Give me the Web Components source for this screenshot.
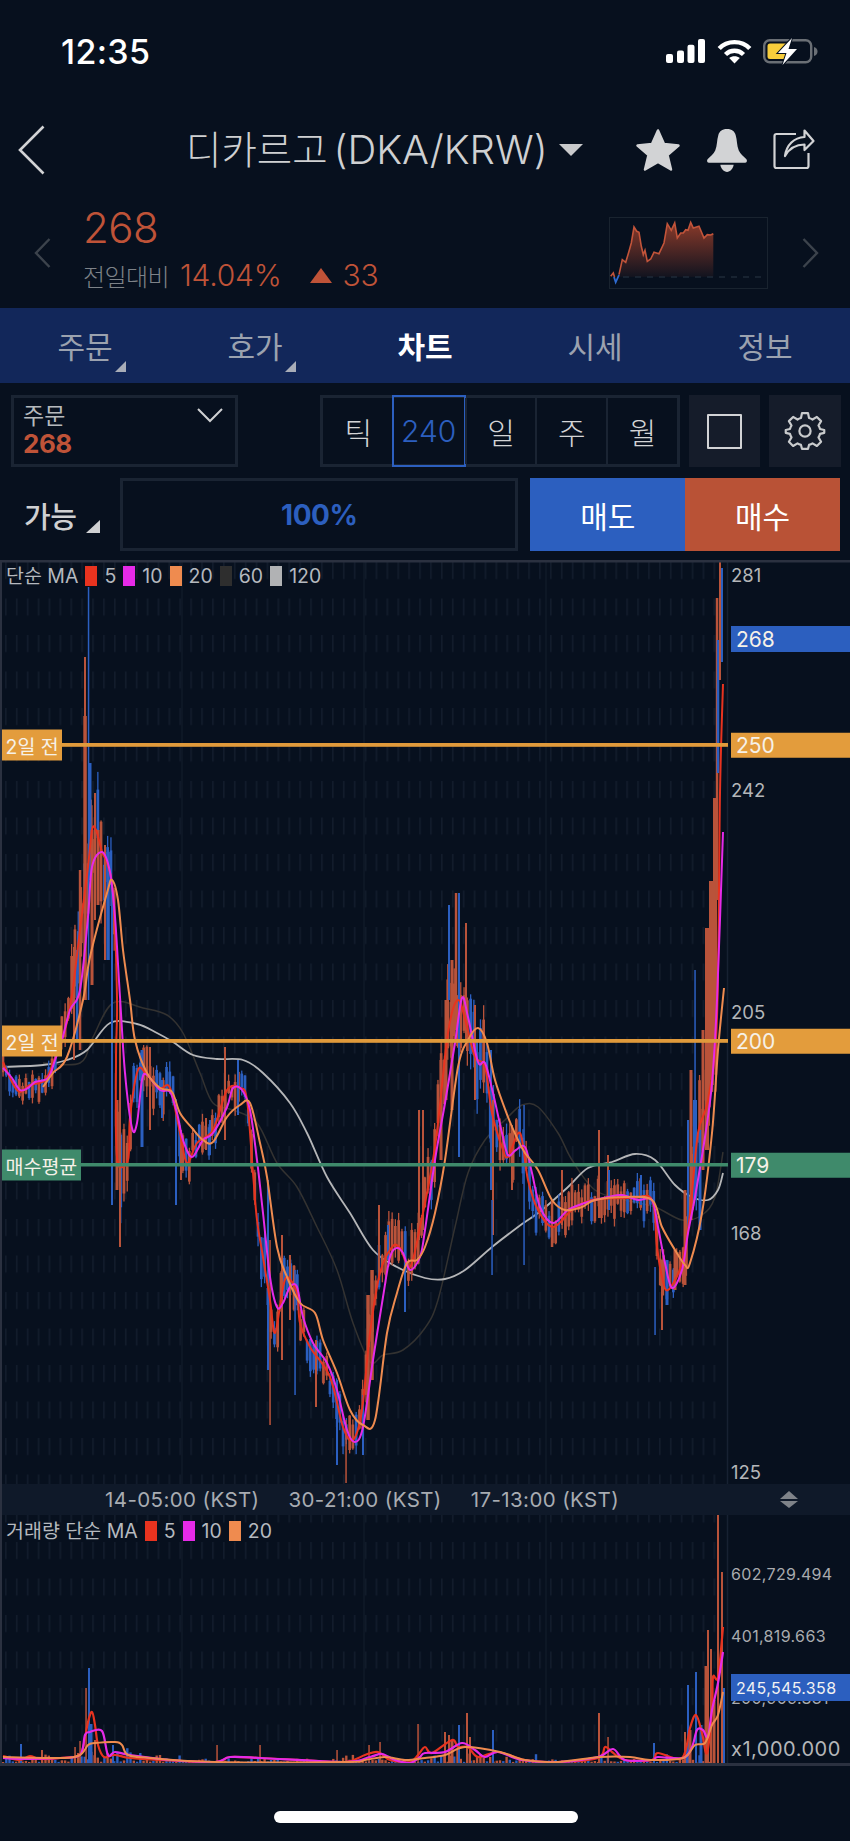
<!DOCTYPE html>
<html lang="ko">
<head>
<meta charset="utf-8">
<title>디카르고 차트</title>
<style>
  html, body { margin: 0; padding: 0; background: #07101e; }
  body { width: 850px; height: 1841px; overflow: hidden; color: #c8cacd; font-family: Inter, "Noto Sans CJK KR", sans-serif; }
</style>
</head>
<body>
<status-bar></status-bar>
<nav-header>디카르고 <span style="font-size:40px">(DKA/KRW)</span></nav-header>
<price-summary></price-summary>
<tab-bar></tab-bar>
<chart-toolbar></chart-toolbar>
<order-row></order-row>
<price-pane>
  <chart-legend slot="legend" label="단순 MA" items="5:#e8331f,10:#e62ae8,20:#ef8b4f,60:#2e2e2e,120:#b1b2b4"></chart-legend>
  <price-tag slot="over" side="left" y="745" color="#e39c3c">2일 전</price-tag>
  <price-tag slot="over" side="left" y="1041" color="#e39c3c">2일 전</price-tag>
  <price-tag slot="over" side="left" y="1164.5" color="#3f8a6b">매수평균</price-tag>
  <price-tag slot="over" y="639" color="#2c5fbf">268</price-tag>
  <price-tag slot="over" y="745" color="#e39c3c">250</price-tag>
  <price-tag slot="over" y="1041" color="#e39c3c">200</price-tag>
  <price-tag slot="over" y="1165" color="#3f8a6b">179</price-tag>
</price-pane>
<time-axis></time-axis>
<volume-pane>
  <chart-legend slot="legend" label="거래량 단순 MA" items="5:#e8331f,10:#e62ae8,20:#ef8b4f"></chart-legend>
</volume-pane>
<home-bar></home-bar>

<script>
const UP = "#b9533a", DOWN = "#2b5fc0", MA_RED = "#e8331f", MA_PINK = "#e62ae8", MA_ORANGE = "#ef8b4f", MA_GRAY = "#b5b6b8", MA_DARK = "#333231";

const RED = [[3,1062],[12,1082],[20,1092],[30,1085],[45,1080],[55,1058],[65,1030],[72,995],[80,930],[88,867],[92,830],[96,830],[102,852],[107,863],[113,893],[117,997],[116,1060],[117,1157],[128,1160],[130,1117],[138,1070],[147,1075],[160,1088],[170,1088],[180,1133],[187,1163],[197,1143],[213,1130],[227,1090],[240,1088],[247,1100],[253,1173],[257,1220],[263,1257],[270,1300],[275,1333],[282,1293],[287,1277],[297,1293],[300,1323],[310,1347],[330,1377],[343,1427],[353,1440],[362,1410],[370,1333],[380,1273],[392,1247],[400,1248],[410,1267],[420,1227],[435,1147],[448,1033],[458,1000],[467,1027],[475,1057],[485,1067],[492,1113],[502,1147],[508,1157],[520,1133],[528,1180],[538,1210],[553,1227],[572,1210],[592,1200],[632,1198],[652,1200],[657,1247],[662,1277],[668,1290],[682,1263],[690,1213],[698,1133],[708,1100],[717,1017],[720,793],[723,684]];
const PINK = [[3,1068],[12,1078],[20,1090],[28,1088],[35,1082],[48,1078],[55,1060],[62,1040],[70,1010],[80,990],[88,917],[92,867],[102,852],[110,872],[115,917],[120,997],[125,1073],[132,1128],[137,1123],[142,1080],[147,1075],[160,1090],[170,1092],[177,1113],[183,1140],[192,1157],[203,1140],[213,1133],[227,1107],[233,1088],[242,1090],[250,1110],[257,1160],[263,1213],[270,1277],[277,1307],[283,1303],[290,1287],[297,1287],[303,1317],[313,1343],[327,1363],[337,1390],[347,1430],[355,1442],[363,1427],[373,1360],[383,1297],[390,1257],[397,1248],[403,1253],[410,1270],[420,1257],[425,1230],[435,1160],[445,1103],[455,1043],[462,998],[468,1017],[478,1062],[485,1063],[493,1093],[502,1133],[508,1155],[516,1150],[525,1147],[532,1173],[540,1207],[553,1223],[568,1210],[585,1203],[595,1200],[608,1197],[622,1195],[638,1200],[652,1200],[658,1227],[665,1263],[672,1288],[682,1270],[688,1233],[695,1197],[705,1137],[712,1083],[717,1000],[723,832]];
const ORANGE = [[43,1087],[53,1073],[67,1057],[83,1000],[90,957],[107,893],[112,880],[118,900],[123,950],[130,1000],[135,1040],[147,1073],[160,1088],[172,1092],[180,1113],[192,1128],[203,1140],[213,1142],[227,1117],[240,1105],[250,1103],[260,1143],[267,1177],[277,1247],[287,1277],[300,1303],[315,1313],[323,1340],[337,1373],[350,1410],[363,1425],[375,1420],[387,1333],[397,1293],[407,1263],[417,1260],[425,1247],[435,1213],[445,1160],[458,1067],[468,1040],[478,1028],[487,1043],[495,1080],[508,1117],[518,1140],[525,1153],[538,1170],[552,1200],[565,1210],[582,1207],[595,1200],[625,1197],[652,1200],[662,1227],[675,1250],[685,1265],[690,1263],[702,1213],[712,1133],[718,1050],[724,988]];
const GRAY = [[2,1067],[43,1065],[67,1060],[87,1050],[110,1023],[137,1024],[157,1033],[173,1042],[193,1055],[217,1059],[243,1060],[263,1073],[290,1103],[307,1133],[327,1177],[350,1213],[373,1250],[397,1267],[425,1278],[445,1279],[465,1270],[492,1247],[518,1227],[542,1210],[568,1187],[588,1168],[612,1162],[635,1154],[655,1160],[675,1185],[692,1197],[708,1200],[718,1190],[723,1173]];
const DARK = [[43,1063],[80,1063],[93,1037],[113,1003],[143,1008],[167,1015],[183,1033],[200,1073],[213,1103],[233,1110],[257,1123],[277,1163],[297,1187],[317,1227],[337,1270],[353,1323],[370,1362],[383,1355],[403,1350],[425,1328],[438,1300],[455,1227],[468,1173],[485,1140],[505,1120],[522,1105],[538,1107],[558,1133],[572,1160],[595,1190],[625,1200],[655,1207],[682,1220],[702,1215],[715,1197],[723,1152]];
const AMP = [[3,14],[60,20],[85,70],[115,60],[130,35],[180,28],[230,20],[260,30],[300,30],[345,22],[365,30],[425,30],[450,55],[490,40],[530,30],[560,24],[650,24],[660,30],[680,20],[700,50],[722,60]];

// [x, top, bottom, colour, width]
const SPIKES = [
  [74,947,1060,UP,2],[80,870,1050,UP,2.5],[77,950,1040,DOWN,2.5],[85,657,760,UP,2],[85,716,1000,UP,3.5],[88.5,587,1000,DOWN,1.5],[90,763,880,DOWN,3],[95,793,920,UP,2],[92,830,985,UP,3],[98,830,905,UP,3],[105,845,960,UP,2],[108,852,960,DOWN,3.5],[112,880,1205,DOWN,2],[120,1000,1247,UP,2],[117,1100,1190,UP,3],
  [142,1050,1147,DOWN,3],[150,1047,1130,UP,2],[176,1110,1205,DOWN,2],[162,1080,1118,DOWN,2],[181,1130,1180,UP,2],[225,1047,1140,UP,2],[238,1060,1115,DOWN,2],[206,1118,1150,UP,2],[210,1120,1155,DOWN,2],
  [270,1240,1425,UP,1.5],[268,1180,1370,DOWN,2],[282,1235,1360,UP,2],[295,1270,1395,DOWN,1.5],[290,1255,1320,UP,2],[316,1340,1407,UP,2],[337,1380,1465,DOWN,2],[346,1420,1483,UP,1.5],[379,1205,1280,UP,2],[388,1225,1260,DOWN,2],[405,1270,1312,DOWN,2],[363,1395,1455,DOWN,2],[368,1295,1420,UP,3.5],[372,1270,1380,UP,3.5],
  [419,1110,1240,UP,2],[423,1110,1230,UP,2],[449,905,1000,DOWN,2],[456,893,1030,UP,2.5],[459,893,1157,DOWN,2],[466,923,1040,UP,2],[452,960,1110,UP,3],[446,1000,1100,UP,3],[441,1060,1160,UP,3],[475,1005,1100,UP,2],[477,1040,1095,DOWN,2],[491,1050,1190,DOWN,2],[493,1100,1235,UP,2],[492,1200,1275,DOWN,1.5],[524,1105,1265,DOWN,1.5],[512,1125,1190,UP,2],[552,1200,1247,UP,2.5],[562,1170,1225,UP,2],[599,1130,1218,UP,2],[608,1155,1205,UP,2],[609,1170,1210,DOWN,2],[641,1175,1205,DOWN,2],
  [655,1267,1335,DOWN,1.5],[662,1260,1330,UP,2],[667,1260,1305,DOWN,3],[675,1250,1290,UP,3],[685,1190,1285,UP,3],[688,1120,1230,DOWN,2],[691,1070,1220,UP,3],[695,970,1100,DOWN,1.5],[695,1100,1200,DOWN,4],[700,1130,1230,DOWN,3],[703,1030,1170,UP,3],[707,928,1150,UP,4],[711,881,1080,UP,4],[715,798,1040,UP,4],[717,598,900,UP,2.5],[718,640,773,DOWN,2.5],[720,562,680,UP,2],[722,568,662,DOWN,2]
];

const VOL_SPIKES = [[89,1668,DOWN,2],[86,1688,UP,1.5],[21,1744,DOWN,2],[42,1750,UP,2],[75,1747,UP,1.5],[80,1741,UP,1.5],[91,1724,DOWN,3],[95,1740,UP,2],[113,1745,DOWN,2],[217,1745,UP,1.5],[260,1745,UP,1.5],[337,1750,UP,1.5],[369,1745,UP,1.5],[380,1742,UP,1.5],[418,1724,UP,1.5],
  [445,1732,UP,2],[449,1735,UP,2],[467,1713,UP,2],[459,1725,DOWN,2],[452,1740,UP,3],[493,1730,DOWN,2],[470,1737,UP,2],[599,1713,UP,2],[608,1737,UP,1.5],[654,1743,DOWN,2],[687,1745,DOWN,2],[685,1732,UP,2],[688,1685,DOWN,2],[696,1672,DOWN,2],[690,1730,UP,3],[706,1666,UP,3],[708,1630,UP,2],[711,1649,UP,2],[714,1700,UP,3],[718,1515,UP,2],[722,1572,UP,2],[724,1688,DOWN,2],[701,1725,DOWN,3]];
const VOL_RED = [[3,1756],[20,1760],[30,1756],[40,1759],[60,1758],[78,1756],[83,1748],[88,1722],[92,1712],[95,1725],[98,1745],[104,1757],[115,1755],[130,1758],[160,1760],[215,1762],[230,1757],[260,1758],[300,1760],[345,1762],[365,1755],[378,1752],[390,1760],[410,1762],[418,1755],[425,1747],[432,1753],[452,1740],[458,1747],[468,1747],[478,1757],[498,1752],[525,1760],[558,1762],[598,1758],[605,1747],[612,1752],[625,1760],[652,1760],[658,1753],[682,1758],[690,1728],[696,1715],[702,1733],[707,1753],[712,1710],[713,1677],[718,1677],[723,1627]];
const VOL_PINK = [[3,1758],[20,1759],[60,1758],[80,1755],[85,1735],[90,1732],[102,1731],[108,1755],[115,1752],[130,1755],[170,1760],[215,1762],[230,1757],[260,1758],[345,1762],[370,1757],[382,1754],[395,1760],[410,1763],[420,1757],[425,1753],[445,1752],[462,1743],[475,1750],[485,1757],[498,1752],[522,1760],[558,1762],[598,1757],[613,1749],[625,1760],[652,1760],[658,1757],[683,1758],[692,1747],[697,1730],[703,1730],[708,1737],[712,1710],[718,1683],[723,1652]];
const VOL_ORANGE = [[3,1757],[60,1758],[80,1755],[88,1745],[95,1743],[115,1742],[122,1745],[128,1755],[150,1758],[215,1762],[345,1762],[365,1760],[385,1757],[405,1760],[425,1758],[445,1755],[465,1747],[500,1752],[525,1760],[558,1762],[600,1757],[630,1757],[650,1760],[683,1758],[695,1745],[705,1743],[712,1725],[718,1715],[723,1692]];

const at = (line, x) => {
  if (x <= line[0][0]) return line[0][1];
  for (let i = 1; i < line.length; i++) {
    if (x <= line[i][0]) {
      const a = line[i - 1], b = line[i];
      return a[1] + (b[1] - a[1]) * (x - a[0]) / (b[0] - a[0] || 1);
    }
  }
  return line[line.length - 1][1];
};

// catmull-rom through the points, so the averages read as curves
const curve = (pts) => {
  let d = `M${pts[0][0]} ${pts[0][1]}`;
  for (let i = 0; i < pts.length - 1; i++) {
    const p0 = pts[i - 1] || pts[i], p1 = pts[i], p2 = pts[i + 1], p3 = pts[i + 2] || p2;
    const k = 6;
    d += `C${(p1[0] + (p2[0] - p0[0]) / k).toFixed(1)} ${(p1[1] + (p2[1] - p0[1]) / k).toFixed(1)} ${(p2[0] - (p3[0] - p1[0]) / k).toFixed(1)} ${(p2[1] - (p3[1] - p1[1]) / k).toFixed(1)} ${p2[0]} ${p2[1]}`;
  }
  return d;
};

const random = (seed) => () => (seed = seed * 16807 % 2147483647) / 2147483647;
const rect = (x, y1, y2, w, fill) => `<rect x="${(x - w / 2).toFixed(1)}" y="${y1.toFixed(1)}" width="${w}" height="${Math.max(y2 - y1, 1).toFixed(1)}" fill="${fill}"/>`;
const stroke = (d, color, w) => `<path d="${d}" fill="none" stroke="${color}" stroke-width="${w}" stroke-linejoin="round"/>`;

const gridDefs = (id, y) => `
  <defs>
    <pattern id="${id}" patternUnits="userSpaceOnUse" x="5" y="${y}" width="10.9" height="36.5">
      <rect width="1.6" height="17" fill="#121c2c"/>
    </pattern>
  </defs>`;

function candles() {
  const rnd = random(4711);
  let out = "";
  for (let x = 3; x < 716; x += 3.27) {
    const mid = at(RED, x), slope = at(RED, x + 4) - at(RED, x - 4), amp = at(AMP, x);
    const color = rnd() < (slope < 0 ? 0.78 : slope > 8 ? 0.35 : 0.55) ? UP : DOWN;
    const c = mid + (rnd() - 0.5) * amp * 0.9;
    const h = amp * (0.25 + rnd() * 0.5);
    out += rect(x, c - h - rnd() * amp * 0.35, c + h + rnd() * amp * 0.35, 1.3, color);
    out += rect(x, c - h, c + h, 2.7, color);
  }
  return out;
}

class StatusBar extends HTMLElement {
  connectedCallback() {
    this.attachShadow({ mode: "open" }).innerHTML = `
      <style>
        :host { display: flex; align-items: flex-start; justify-content: space-between; height: 100px; box-sizing: border-box; padding: 35px 30px 0 61px; }
        .time { font-size: 34px; line-height: 34px; font-weight: 500; color: #fff; letter-spacing: 0.3px; }
        .icons { display: flex; gap: 11px; margin-top: 4px; }
        svg { display: block; }
      </style>
      <div class="time">12:35</div>
      <div class="icons">
        <svg width="40" height="25" viewBox="0 0 40 25" fill="#fff">
          <rect x="0" y="15" width="7" height="9" rx="2"/><rect x="11" y="11.5" width="7" height="12.5" rx="2"/><rect x="21.5" y="5.7" width="7" height="18.3" rx="2"/><rect x="32" y="0" width="7" height="24" rx="2"/>
        </svg>
        <svg width="35" height="25" viewBox="0 0 35 25" fill="none" stroke="#fff" stroke-width="4.4">
          <path d="M2.2 9.5C10 1 25 1 32.8 9.5"/><path d="M8.5 15.5C13.5 10.5 21.5 10.5 26.5 15.5"/>
          <path d="M17.5 24.5L12.2 19C15 16.8 20 16.8 22.8 19Z" fill="#fff" stroke="none"/>
        </svg>
        <svg width="57" height="29" viewBox="0 0 57 29" style="margin-top:-2px">
          <rect x="1.2" y="3.2" width="47" height="22" rx="5.5" fill="none" stroke="#6a6f75" stroke-width="2.4"/>
          <path d="M51 10c2.500.5 3.500 2.500 3.500 4.500s-1 4-3.500 4.500z" fill="#6a6f75"/>
          <rect x="4.500" y="6.500" width="21" height="15.500" rx="2.500" fill="#f7cd3c"/>
          <path d="M29 1L15 16H23.500L19.500 28L34 12H25.500Z" fill="#fff" stroke="#07101e" stroke-width="2" paint-order="stroke"/>
        </svg>
      </div>`;
  }
}

class NavHeader extends HTMLElement {
  connectedCallback() {
    this.attachShadow({ mode: "open" }).innerHTML = `
      <style>
        :host { display: flex; align-items: center; height: 100px; box-sizing: border-box; padding: 0 35px 0 18px; }
        svg { display: block; flex: none; }
        .title { margin-left: 140px; font-size: 38.500px; font-weight: 300; line-height: 50px; word-spacing: -5px; color: #cfd0d2; white-space: nowrap; }
        .caret { margin-left: 11px; }
        .star { margin-left: auto; }
        .bell { margin-left: 25px; }
        .share { margin-left: 25px; }
      </style>
      <svg width="28" height="50" viewBox="0 0 28 50" fill="none" stroke="#d2d3d5" stroke-width="2.6"><path d="M25.500 1.500L2 25L25.500 48.500"/></svg>
      <div class="title"><slot></slot></div>
      <svg class="caret" width="24" height="12" viewBox="0 0 24 12"><path d="M0 0H24L12 12Z" fill="#c9cacc"/></svg>
      <svg class="star" width="46" height="44" viewBox="0 0 46 44"><path d="M23 2.500L29 16L43.500 17.500L32.500 27L36 41.500L23 33.800L10 41.500L13.500 27L2.500 17.500L17 16Z" fill="#d2d3d5" stroke="#d2d3d5" stroke-width="2.500" stroke-linejoin="round"/></svg>
      <svg class="bell" width="42" height="43" viewBox="0 0 40 42" fill="#d2d3d5">
        <path d="M20 0C15 0 12.500 2.500 11.500 6C10 11 10.500 16 8.500 21C7 24.500 3.500 27 1 29.500C0 31 .5 33 2.500 33H37.500C39.500 33 40 31 39 29.500C36.500 27 33 24.500 31.500 21C29.500 16 30 11 28.500 6C27.500 2.500 25 0 20 0Z"/>
        <path d="M13.500 35H26.500C26 39 23 42 20 42S14 39 13.500 35Z"/>
      </svg>
      <svg class="share" width="42" height="42" viewBox="0 0 42 42" fill="none" stroke="#d2d3d5" stroke-width="2.200">
        <path d="M23 5H3.500A2 2 0 0 0 1.500 7V37A2 2 0 0 0 3.500 39H33.500A2 2 0 0 0 35.500 37V24"/>
        <path d="M31.500 1.500L40.500 12L31.500 21V15.500C23 15.500 16.500 19 12 27C13.500 16 21 8.500 31.500 8Z" stroke-linejoin="round"/>
      </svg>`;
  }
}

class PriceSummary extends HTMLElement {
  connectedCallback() {
    const line = [[10,57.7],[13.3,42.7],[16.7,45.3],[20,34.3],[22.3,26],[25,10],[27.7,14.3],[30,15.3],[32.3,29.3],[34.3,37.7],[36,33.3],[38.3,44.3],[41.7,42],[45,35.3],[50,36.7],[55,26],[58.3,6.7],[62.3,13.3],[65.7,6],[68.3,21],[71.7,16],[74.3,16],[76.7,12.7],[79,13.3],[81.7,5.3],[84.3,11],[90,9.3],[95,21],[98.3,17.7],[101.7,18],[104.3,16.7]];
    const path = line.map((p, i) => `${i ? "L" : "M"}${p[0]} ${p[1]}`).join("");
    this.attachShadow({ mode: "open" }).innerHTML = `
      <style>
        :host { display: flex; align-items: flex-start; height: 108px; box-sizing: border-box; padding-left: 34px; }
        svg { display: block; flex: none; }
        .left { margin-top: 38px; }
        .info { margin-left: 32px; flex: none; width: 526px; }
        .price { margin-top: 5px; font-size: 42px; line-height: 46px; font-weight: 300; color: #bf5338; letter-spacing: -0.5px; }
        .change { display: flex; align-items: center; margin-top: 7px; height: 34px; font-size: 30px; font-weight: 300; color: #bf5338; letter-spacing: -0.2px; }
        .label { font-size: 24px; color: #7d8288; letter-spacing: -0.6px; margin-right: 11px; }
        .tri { margin: 0 11px 0 28px; }
        .spark { margin-top: 17px; }
        .right { margin: 38px 0 0 33px; }
      </style>
      <svg class="left" width="17" height="30" viewBox="0 0 17 30" fill="none" stroke="#3c434c" stroke-width="2.400"><path d="M15.500 1L2 15L15.500 29"/></svg>
      <div class="info">
        <div class="price">268</div>
        <div class="change"><span class="label">전일대비</span><span>14.04%</span>
          <svg class="tri" width="22" height="15" viewBox="0 0 22 15"><path d="M11 0L22 15H0Z" fill="#bf5338"/></svg><span>33</span></div>
      </div>
      <svg class="spark" width="160" height="73" viewBox="0 0 160 73">
        <defs><linearGradient id="g" x1="0" y1="0" x2="0" y2="1"><stop offset="0" stop-color="#8a3a2a"/><stop offset="1" stop-color="#8a3a2a" stop-opacity=".08"/></linearGradient></defs>
        <rect x=".5" y=".5" width="158" height="71" fill="none" stroke="#19232f"/>
        <path d="${path}L104.300 60H10Z" fill="url(#g)"/>
        <path d="M14 60H153" stroke="#1f2a38" stroke-width="1.400" stroke-dasharray="6 6"/>
        <path d="${path}" fill="none" stroke="#c2543a" stroke-width="1.600"/>
        <path d="M5 60L6.700 65.300L10 58" fill="none" stroke="#2f6bd0" stroke-width="1.800"/>
        <path d="M1.700 59.300L4.300 56L5.500 60" fill="none" stroke="#c2543a" stroke-width="1.600"/>
      </svg>
      <svg class="right" width="17" height="30" viewBox="0 0 17 30" fill="none" stroke="#3c434c" stroke-width="2.400"><path d="M1.500 1L15 15L1.500 29"/></svg>`;
  }
}

class TabBar extends HTMLElement {
  connectedCallback() {
    const tabs = [["주문", 1], ["호가", 1], ["차트", 0, 1], ["시세"], ["정보"]];
    this.attachShadow({ mode: "open" }).innerHTML = `
      <style>
        :host { display: grid; grid-template-columns: repeat(5, 170px); height: 75px; background: #12275a; }
        .tab { position: relative; display: flex; align-items: center; justify-content: center; font-size: 30px; color: #9ba2af; padding-bottom: 1px; }
        .on { color: #fff; font-weight: 700; }
        svg { position: absolute; left: 115px; top: 53px; }
      </style>
      ${tabs.map(([t, tri, on]) => `<div class="tab ${on ? "on" : ""}">${t}${tri ? `<svg width="11" height="11" viewBox="0 0 11 11"><path d="M11 0V11H0Z" fill="#a8adb8"/></svg>` : ""}</div>`).join("")}`;
  }
}

class ChartToolbar extends HTMLElement {
  connectedCallback() {
    const periods = ["틱", "240", "일", "주", "월"];
    this.attachShadow({ mode: "open" }).innerHTML = `
      <style>
        :host { display: flex; align-items: stretch; height: 72px; margin-top: 12px; padding: 0 9px 0 11px; }
        .order { position: relative; width: 227px; box-sizing: border-box; border: 3px solid #1a2433; padding: 5px 9px; margin-right: 82px; }
        .order b { display: block; font-size: 26px; line-height: 30px; color: #bf5338; letter-spacing: -0.5px; }
        .order span { display: block; font-size: 23px; line-height: 26px; color: #b5b9bd; }
        .order svg { position: absolute; right: 12px; top: 10px; }
        .seg { display: grid; grid-template-columns: repeat(5, 1fr); width: 360px; box-sizing: border-box; border: 3px solid #1a2433; margin-right: 9px; }
        .seg div { display: flex; align-items: center; justify-content: center; font-size: 30px; font-weight: 300; color: #d3d4d6; border-left: 2px solid #1a2433; box-sizing: border-box; }
        .seg div:first-child { border-left: 0; }
        .seg .on { color: #2c5fbf; outline: 2.500px solid #2c5fbf; outline-offset: -1px; border: 0; margin: -2px 0 -2px -1px; }
        .btn { display: flex; align-items: center; justify-content: center; width: 71px; background: #151c2a; }
        .btn + .btn { margin-left: 9px; width: 72px; }
        .sq { width: 35px; height: 35px; box-sizing: border-box; border: 2.500px solid #d2d3d5; border-radius: 1px; }
      </style>
      <div class="order"><span>주문</span><b>268</b>
        <svg width="26" height="15" viewBox="0 0 26 15" fill="none" stroke="#cfd0d2" stroke-width="2"><path d="M1 1L13 13L25 1"/></svg></div>
      <div class="seg">${periods.map((p) => `<div class="${p === "240" ? "on" : ""}">${p}</div>`).join("")}</div>
      <div class="btn"><div class="sq"></div></div>
      <div class="btn">
        <svg width="42" height="42" viewBox="0 0 24 24" fill="none" stroke="#c9cbcd" stroke-width="1.250" stroke-linejoin="round">
          <circle cx="12" cy="12" r="3.200"/>
          <path d="M10.300 2.500H13.700L14.300 5.300C15 5.500 15.700 5.800 16.300 6.200L18.800 4.700L21.200 7.100L19.700 9.600C20.100 10.200 20.400 10.900 20.600 11.600L23 12.200V13.800L20.600 14.400C20.400 15.100 20.100 15.800 19.700 16.400L21.200 18.900L18.800 21.300L16.300 19.800C15.700 20.200 15 20.500 14.300 20.700L13.700 23H10.300L9.700 20.700C9 20.500 8.300 20.200 7.700 19.800L5.200 21.300L2.800 18.900L4.300 16.400C3.900 15.800 3.600 15.100 3.400 14.400L1 13.800V12.200L3.400 11.600C3.600 10.900 3.900 10.200 4.300 9.600L2.800 7.100L5.200 4.700L7.700 6.200C8.300 5.800 9 5.500 9.700 5.300Z" transform="translate(0 -.75)"/>
        </svg>
      </div>`;
  }
}

class OrderRow extends HTMLElement {
  connectedCallback() {
    this.attachShadow({ mode: "open" }).innerHTML = `
      <style>
        :host { display: flex; height: 73px; margin-top: 11px; padding: 0 10px 0 0; }
        .avail { position: relative; width: 120px; flex: none; box-sizing: border-box; padding-left: 24px; display: flex; align-items: center; font-size: 29px; font-weight: 500; color: #cfd0d2; letter-spacing: -0.5px; }
        .avail svg { position: absolute; left: 86px; top: 42px; }
        .rate { width: 399px; box-sizing: border-box; border: 3px solid #1a2433; display: flex; align-items: center; justify-content: center; font-size: 28px; font-weight: 700; color: #2c5fbf; letter-spacing: -0.5px; margin-right: 12px; }
        .act { width: 155px; display: flex; align-items: center; justify-content: center; font-size: 30px; color: #fff; }
        .sell { background: #2c5fbf; }
        .buy { background: #b95236; }
      </style>
      <div class="avail">가능<svg width="14" height="13" viewBox="0 0 14 13"><path d="M14 0V13H0Z" fill="#cfd0d2"/></svg></div>
      <div class="rate">100%</div>
      <div class="act sell">매도</div>
      <div class="act buy">매수</div>`;
  }
}

class ChartLegend extends HTMLElement {
  connectedCallback() {
    const items = this.getAttribute("items").split(",").map((s) => s.split(":"));
    this.attachShadow({ mode: "open" }).innerHTML = `
      <style>
        :host { position: absolute; left: 6px; top: 6px; display: flex; align-items: center; gap: 7px; font-size: 19.500px; line-height: 20px; color: #b5b9bf; white-space: nowrap; }
        .sw { width: 12px; height: 20px; }
      </style>
      <span>${this.getAttribute("label")}</span>
      ${items.map(([n, c]) => `<span class="sw" style="background:${c}"></span><span>${n}</span>`).join("")}`;
  }
}

class PriceTag extends HTMLElement {
  connectedCallback() {
    const left = this.getAttribute("side") === "left";
    const mid = parseFloat(this.getAttribute("y")) - 560;
    this.attachShadow({ mode: "open" }).innerHTML = `
      <style>
        :host { position: absolute; top: ${mid}px; transform: translateY(-50%); display: flex; align-items: center; box-sizing: border-box; background: ${this.getAttribute("color")}; color: #f6f1e8; white-space: nowrap;
          ${left ? "left: 2px; height: 31px; padding: 0 3.500px; font-size: 19.500px;" : `left: 731px; width: 119px; height: ${mid === 79 ? 26 : 24.500}px; padding-left: 5px; font-size: 21px;`} }
      </style><slot></slot>`;
  }
}

class PricePane extends HTMLElement {
  connectedCallback() {
    const ticks = [[281, 575], [242, 790], [205, 1012], [168, 1233], [125, 1472]];
    const spikes = SPIKES.map(([x, a, b, c, w]) => rect(x, a, b, w, c)).join("");
    this.attachShadow({ mode: "open" }).innerHTML = `
      <style>
        :host { position: relative; display: block; height: 924px; margin-top: 9px; box-sizing: border-box; }
        svg { display: block; }
        .tick { position: absolute; left: 731px; transform: translateY(-50%); font-size: 18.500px; color: #b4b6b9; }
      </style>
      <svg width="850" height="924" viewBox="0 560 850 924">
        ${gridDefs("grid", 562)}
        <rect x="0" y="562" width="720" height="922" fill="url(#grid)"/>
        <path d="M182 562V1484M364 562V1484M546 562V1484" stroke="#101a29" stroke-width="1.500"/>
        <path d="M727.500 562V1484" stroke="#172132" stroke-width="1.500"/>
        ${stroke(curve(DARK), MA_DARK, 1.5)}
        ${stroke(curve(GRAY), MA_GRAY, 1.8)}
        ${candles()}${spikes}
        ${stroke(curve(RED), MA_RED, 2)}
        ${stroke(curve(PINK), MA_PINK, 2)}
        ${stroke(curve(ORANGE), MA_ORANGE, 2)}
        <rect x="60" y="743" width="668" height="3.800" fill="#e09a3b"/>
        <rect x="60" y="1039" width="668" height="3.800" fill="#e09a3b"/>
        <rect x="78" y="1163" width="650" height="3.500" fill="#3f8a6b"/>
        <rect x="0" y="560" width="850" height="2.500" fill="#2b3140"/>
        <rect x="0" y="560" width="2" height="924" fill="#2b3140"/>
      </svg>
      ${ticks.map(([v, y]) => `<div class="tick" style="top:${y - 560}px">${v}</div>`).join("")}
      <slot name="legend"></slot><slot name="over"></slot>`;
  }
}

class TimeAxis extends HTMLElement {
  connectedCallback() {
    this.attachShadow({ mode: "open" }).innerHTML = `
      <style>
        :host { position: relative; display: flex; align-items: center; gap: 29px; height: 31px; box-sizing: border-box; padding-left: 103px; background: #0f1929; border-left: 2px solid #2b3140; font-size: 20.500px; color: #a8acb2; letter-spacing: 0.4px; white-space: nowrap; }
        svg { position: absolute; left: 778px; top: 7px; }
      </style>
      <span>14-05:00 (KST)</span><span>30-21:00 (KST)</span><span>17-13:00 (KST)</span>
      <svg width="18" height="17" viewBox="0 0 18 17" fill="#7f8389"><path d="M9 0L18 8H0Z"/><path d="M0 10H18L9 17Z"/></svg>`;
  }
}

class VolumePane extends HTMLElement {
  connectedCallback() {
    const rnd = random(991);
    let bars = "";
    for (let x = 3; x < 712; x += 3.27) {
      const busy = x > 70 && x < 135 ? 16 : (x > 430 && x < 510) || x > 680 ? 12 : 5;
      const top = 1763 - 1 - rnd() * rnd() * busy - (rnd() < 0.08 ? 6 : 0);
      bars += rect(x, top, 1763, 2.4, rnd() < 0.6 ? UP : DOWN);
    }
    const spikes = VOL_SPIKES.map(([x, t, c, w]) => rect(x, t, 1763, w, c)).join("");
    const ticks = [["602,729.494", 1574], ["401,819.663", 1636], ["200,909.831", 1698]];
    this.attachShadow({ mode: "open" }).innerHTML = `
      <style>
        :host { position: relative; display: block; height: 251px; }
        svg { display: block; }
        .tick { position: absolute; left: 731px; transform: translateY(-50%); font-size: 16px; color: #a9abaf; letter-spacing: 0.35px; white-space: nowrap; }
        .unit { font-size: 20px; letter-spacing: 0.5px; color: #b4b6b9; }
        .last { position: absolute; left: 731px; top: 159px; width: 119px; height: 27px; box-sizing: border-box; padding-left: 5px; display: flex; align-items: center; background: #2c5fbf; color: #f2f2f2; font-size: 16px; letter-spacing: 0.35px; }
      </style>
      <svg width="850" height="251" viewBox="0 1515 850 251">
        ${gridDefs("vgrid", 1505.5)}
        <rect x="0" y="1515" width="720" height="247" fill="url(#vgrid)"/>
        <path d="M182 1515V1763M364 1515V1763M546 1515V1763" stroke="#101a29" stroke-width="1.500"/>
        <path d="M727.500 1515V1763" stroke="#172132" stroke-width="1.500"/>
        ${bars}${spikes}
        ${stroke(curve(VOL_RED), MA_RED, 2.2)}
        ${stroke(curve(VOL_PINK), MA_PINK, 2.2)}
        ${stroke(curve(VOL_ORANGE), MA_ORANGE, 2)}
        <rect x="0" y="1763" width="850" height="3" fill="#2b3140"/>
        <rect x="0" y="1515" width="2" height="251" fill="#2b3140"/>
      </svg>
      ${ticks.map(([v, y]) => `<div class="tick" style="top:${y - 1515}px">${v}</div>`).join("")}
      <div class="tick unit" style="top:234px">x1,000.000</div>
      <div class="last">245,545.358</div>
      <slot name="legend"></slot>`;
  }
}

class HomeBar extends HTMLElement {
  connectedCallback() {
    this.attachShadow({ mode: "open" }).innerHTML = `
      <style>
        :host { display: block; padding: 45px 0 0 274px; }
        div { width: 304px; height: 12px; border-radius: 6px; background: #fff; }
      </style><div></div>`;
  }
}

customElements.define("status-bar", StatusBar);
customElements.define("nav-header", NavHeader);
customElements.define("price-summary", PriceSummary);
customElements.define("tab-bar", TabBar);
customElements.define("chart-toolbar", ChartToolbar);
customElements.define("order-row", OrderRow);
customElements.define("chart-legend", ChartLegend);
customElements.define("price-tag", PriceTag);
customElements.define("price-pane", PricePane);
customElements.define("time-axis", TimeAxis);
customElements.define("volume-pane", VolumePane);
customElements.define("home-bar", HomeBar);
</script>
</body>
</html>
